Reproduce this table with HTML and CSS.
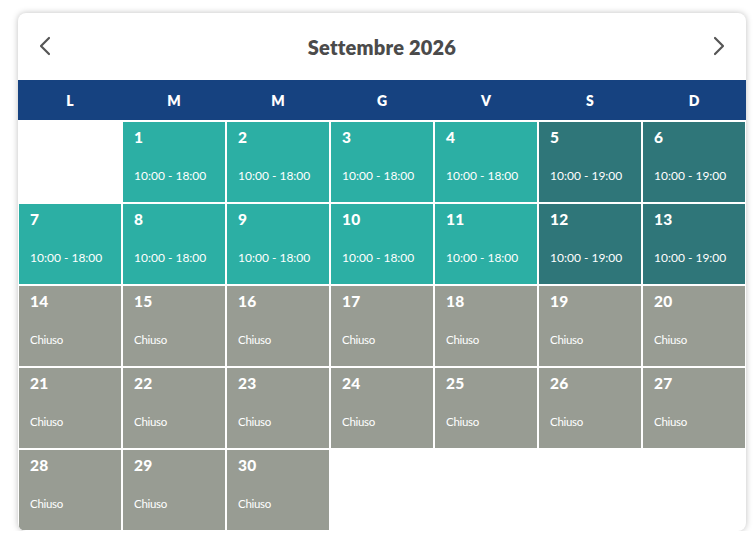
FILE: index.html
```html
<!DOCTYPE html>
<html lang="it">
<head>
<meta charset="utf-8">
<title>Settembre 2026</title>
<link rel="stylesheet" href="styles.css">
</head>
<body>
<div class="card">
  <div class="head">
    <button class="nav" aria-label="Mese precedente">
      <svg width="14" height="20" viewBox="0 0 14 20"><path d="M11 2 L3 10 L11 18" fill="none" stroke="#555" stroke-width="2.2" stroke-linecap="round" stroke-linejoin="round"/></svg>
    </button>
    <h1 class="title">Settembre 2026</h1>
    <button class="nav" aria-label="Mese successivo">
      <svg width="14" height="20" viewBox="0 0 14 20"><path d="M3 2 L11 10 L3 18" fill="none" stroke="#555" stroke-width="2.2" stroke-linecap="round" stroke-linejoin="round"/></svg>
    </button>
  </div>
  <div class="week">
    <span>L</span><span>M</span><span>M</span><span>G</span><span>V</span><span>S</span><span>D</span>
  </div>
  <div class="grid">
    <div class="cell empty"></div>
    <div class="cell open"><b>1</b><small>10:00 - 18:00</small></div>
    <div class="cell open"><b>2</b><small>10:00 - 18:00</small></div>
    <div class="cell open"><b>3</b><small>10:00 - 18:00</small></div>
    <div class="cell open"><b>4</b><small>10:00 - 18:00</small></div>
    <div class="cell weekend"><b>5</b><small>10:00 - 19:00</small></div>
    <div class="cell weekend"><b>6</b><small>10:00 - 19:00</small></div>
    <div class="cell open"><b>7</b><small>10:00 - 18:00</small></div>
    <div class="cell open"><b>8</b><small>10:00 - 18:00</small></div>
    <div class="cell open"><b>9</b><small>10:00 - 18:00</small></div>
    <div class="cell open"><b>10</b><small>10:00 - 18:00</small></div>
    <div class="cell open"><b>11</b><small>10:00 - 18:00</small></div>
    <div class="cell weekend"><b>12</b><small>10:00 - 19:00</small></div>
    <div class="cell weekend"><b>13</b><small>10:00 - 19:00</small></div>
    <div class="cell closed"><b>14</b><small>Chiuso</small></div>
    <div class="cell closed"><b>15</b><small>Chiuso</small></div>
    <div class="cell closed"><b>16</b><small>Chiuso</small></div>
    <div class="cell closed"><b>17</b><small>Chiuso</small></div>
    <div class="cell closed"><b>18</b><small>Chiuso</small></div>
    <div class="cell closed"><b>19</b><small>Chiuso</small></div>
    <div class="cell closed"><b>20</b><small>Chiuso</small></div>
    <div class="cell closed"><b>21</b><small>Chiuso</small></div>
    <div class="cell closed"><b>22</b><small>Chiuso</small></div>
    <div class="cell closed"><b>23</b><small>Chiuso</small></div>
    <div class="cell closed"><b>24</b><small>Chiuso</small></div>
    <div class="cell closed"><b>25</b><small>Chiuso</small></div>
    <div class="cell closed"><b>26</b><small>Chiuso</small></div>
    <div class="cell closed"><b>27</b><small>Chiuso</small></div>
    <div class="cell closed"><b>28</b><small>Chiuso</small></div>
    <div class="cell closed"><b>29</b><small>Chiuso</small></div>
    <div class="cell closed"><b>30</b><small>Chiuso</small></div>
  </div>
</div>
</body>
</html>
```
FILE: styles.css
```css
* { box-sizing: border-box; }
html, body { margin: 0; background: #fff; }
body {
  padding: 13px 7px 0 18px;
  font-family: Lato, "Open Sans", sans-serif;
}
.card {
  width: 728px;
  height: 518px;
  background: #fff;
  border-radius: 8px;
  box-shadow: 0 0 6px rgba(0,0,0,0.25);
  overflow: hidden;
  padding: 0 1px;
}
.head {
  height: 67px;
  display: flex;
  align-items: center;
  justify-content: space-between;
  padding: 0 16px 0 16px;
}
.nav {
  background: none;
  border: 0;
  padding: 0;
  width: 20px;
  height: 24px;
  display: flex;
  align-items: center;
  justify-content: center;
  margin-top: -2px;
}
.title {
  margin: 0;
  font-size: 20px;
  font-weight: 800;
  color: #4b4b4b;
  letter-spacing: 0.2px;
}
.week {
  height: 40px;
  margin: 0 -1px;
  background: #164280;
  display: grid;
  grid-template-columns: repeat(7, 1fr);
  align-items: center;
  color: #fff;
  font-weight: 800;
  font-size: 14px;
  text-align: center;
}
.grid {
  margin-top: 2px;
  display: grid;
  grid-template-columns: repeat(7, 1fr);
  grid-auto-rows: 80px;
  gap: 2px;
}
.cell {
  display: flex;
  flex-direction: column;
  padding: 6px 11px 0;
  color: #fff;
}
.cell b {
  font-size: 15.5px;
  font-weight: 900;
  line-height: 18px;
  letter-spacing: 0.3px;
}
.cell small {
  margin-top: 23px;
  font-size: 12px;
  line-height: 14px;
}
.open { background: #2cafa4; }
.weekend { background: #2f7679; }
.closed { background: #989c93; }
.closed small { font-size: 11.5px; letter-spacing: -0.3px; }
.empty { background: #fff; }
```
